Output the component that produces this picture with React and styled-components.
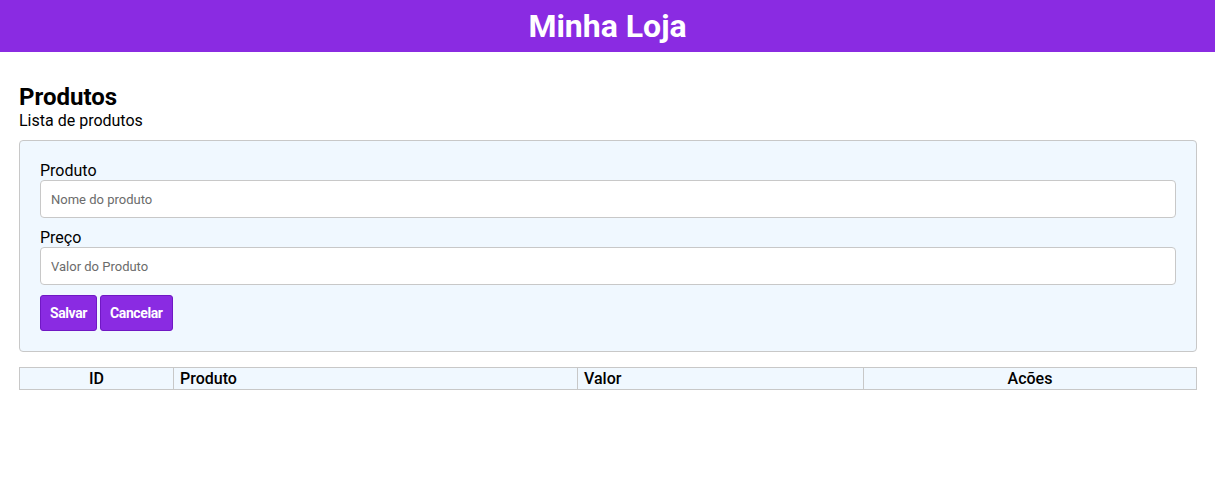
import React from "react";
import styled, { createGlobalStyle } from "styled-components";

const GlobalStyle = createGlobalStyle`
  * {
    box-sizing: border-box;
  }
  body {
    margin: 0;
    font-family: Roboto, "Liberation Sans", Arial, sans-serif;
    color: #000;
    background: #fff;
  }
`;

const Header = styled.header`
  height: 52px;
  background: #8a2be2;
  display: flex;
  align-items: center;
  justify-content: center;
  h1 {
    margin: 0;
    color: #fff;
    font-size: 32px;
    font-weight: 700;
    line-height: 1;
  }
`;

const Main = styled.main`
  padding: 31px 18px 0 19px;
`;

const Title = styled.h2`
  margin: 0;
  font-size: 24px;
  font-weight: 700;
  line-height: 28px;
`;

const Subtitle = styled.p`
  margin: 0 0 10px;
  font-size: 16px;
  line-height: 19px;
`;

const Card = styled.form`
  background: #f0f8ff;
  border: 1px solid #c8c8c8;
  border-radius: 4px;
  padding: 20px;
  display: flex;
  flex-direction: column;
`;

const Field = styled.div`
  display: flex;
  flex-direction: column;
  margin-bottom: 10px;
`;

const Label = styled.label`
  font-size: 16px;
  line-height: 19px;
`;

const Input = styled.input`
  height: 38px;
  border: 1px solid #c8c8c8;
  border-radius: 4px;
  background: #fff;
  padding: 0 10px;
  font-family: inherit;
  font-size: 13px;
  &::placeholder {
    color: #6b6b6b;
  }
`;

const Actions = styled.div`
  display: flex;
  gap: 3px;
`;

const Button = styled.button`
  height: 36px;
  padding: 0 9px;
  background: #8a2be2;
  color: #fff;
  border: 1px solid #7018c4;
  border-radius: 3px;
  font-family: inherit;
  font-size: 14px;
  font-weight: 700;
  letter-spacing: -0.4px;
  cursor: pointer;
`;

const Table = styled.table`
  width: 100%;
  margin-top: 15px;
  border-collapse: collapse;
  background: #f0f8ff;
`;

const Th = styled.th`
  border: 1px solid #c8c8c8;
  height: 22px;
  padding: 0 6px;
  font-size: 16px;
  font-weight: 500;
  line-height: 19px;
  text-align: ${(p) => p.$align || "left"};
  width: ${(p) => p.$width};
`;

const App = () => {
  return (
    <>
      <GlobalStyle />
      <Header>
        <h1>Minha Loja</h1>
      </Header>
      <Main>
        <Title>Produtos</Title>
        <Subtitle>Lista de produtos</Subtitle>
        <Card onSubmit={(e) => e.preventDefault()}>
          <Field>
            <Label htmlFor="produto">Produto</Label>
            <Input id="produto" placeholder="Nome do produto" />
          </Field>
          <Field>
            <Label htmlFor="preco">Preço</Label>
            <Input id="preco" placeholder="Valor do Produto" />
          </Field>
          <Actions>
            <Button type="submit">Salvar</Button>
            <Button type="button">Cancelar</Button>
          </Actions>
        </Card>
        <Table>
          <thead>
            <tr>
              <Th $align="center" $width="154px">ID</Th>
              <Th $width="404px">Produto</Th>
              <Th $width="286px">Valor</Th>
              <Th $align="center">Acões</Th>
            </tr>
          </thead>
        </Table>
      </Main>
    </>
  );
};

export default App;
